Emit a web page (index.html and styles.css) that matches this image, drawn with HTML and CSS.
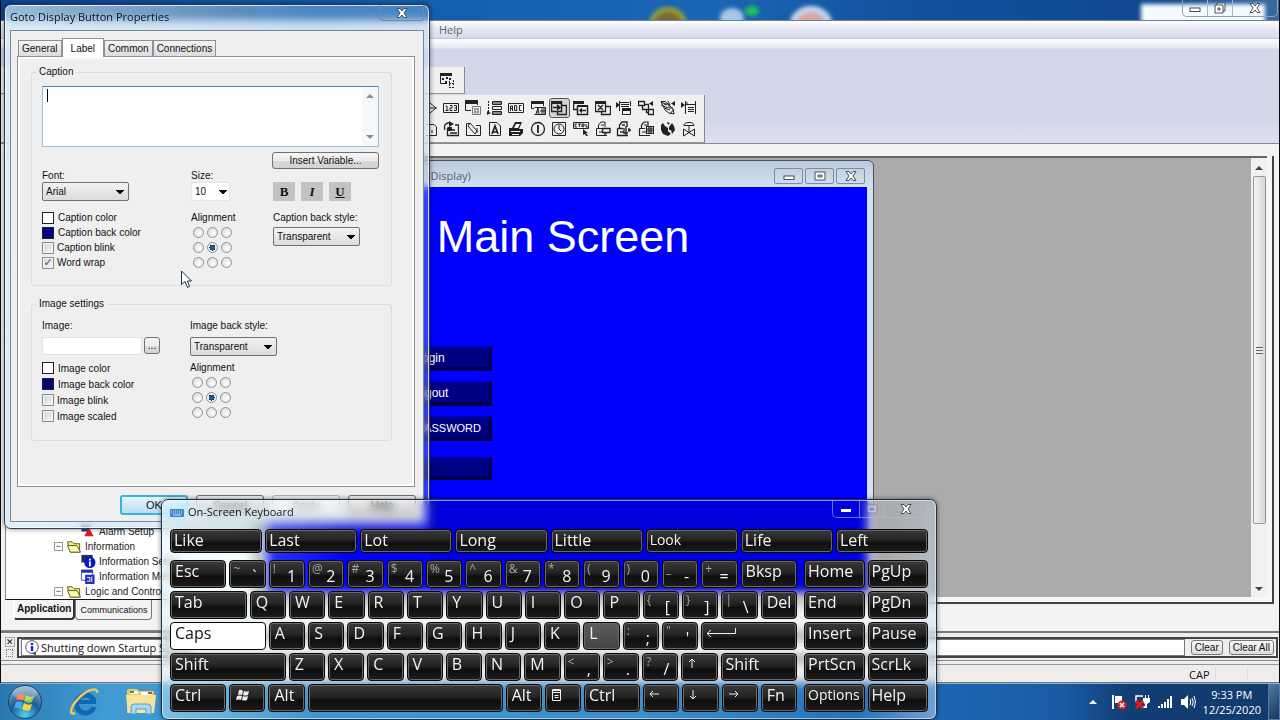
FILE: index.html
```html
<!DOCTYPE html>
<html lang="en">
<head>
<meta charset="utf-8">
<title>Goto Display Button Properties</title>
<link rel="stylesheet" href="styles.css">
</head>
<body>
<div class="desktop">
  <main class="app">
    <header class="app-title">
      <span class="app-name">FactoryTalk View Studio - Machine Edition</span>
      <span class="blob blob-a"></span><span class="blob blob-b"></span><span class="blob blob-c"></span><span class="blob blob-d"></span>
      <span class="glow"></span>
      <div class="win-controls">
        <button aria-label="Minimize"><svg width="12" height="12" viewBox="0 0 12 12"><rect class="glyph" x="1" y="6" width="10" height="3.500"/></svg></button>
        <button aria-label="Restore"><svg width="12" height="12" viewBox="0 0 12 12"><path class="glyph" d="M3 1H11V9H9V11H1V3H3Z M4 6H6V8H4Z M3 3H9V9"/></svg></button>
        <button class="wide" aria-label="Close"><svg width="12" height="12" viewBox="0 0 12 12"><path class="glyph" d="M1 1.500H4L6 4L8 1.500H11L8 6L11 10.500H8L6 8L4 10.500H1L4 6Z"/></svg></button>
      </div>
    </header>
    <nav class="menu"><button>Help</button></nav>
    <section class="rebar">
      <div class="toolbar short">
        <button aria-label="Objects"><svg class="ic" viewBox="0 0 16 16"><path d="M1.500 1.500H12.500V4M1.500 1.500V11.500H8"/><path class="f" d="M1 1H13V4H1ZM3 6h2v2H3ZM7 5h2v2H7ZM6 9h2v2H6ZM10 6h2v2h-2Z"/><path d="M10.500 9V15.500M10 11.500H15M10 15.500H15M14.500 8V14" stroke-dasharray="2 1"/></svg></button>
      </div>
      <div class="toolbar long">
        <button aria-label="Shape"><svg class="ic" viewBox="0 0 16 16"><path d="M8 3L14 8L8 13M6 8H15"/></svg></button>
        <button aria-label="Numeric display"><svg class="ic" viewBox="0 0 16 16"><path d="M.500 3.500H15.500V12.500H.500ZM2.500 6H4V10.500M2.500 10.500H5.500M7 5.500H9V8H7V10.500H9.500M11 5.500H13.500V10.500H11M11.500 8H13.500"/></svg></button>
        <button aria-label="Numeric input"><svg class="ic" viewBox="0 0 16 16"><path class="f" d="M0 0H13V4H0Z"/><path d="M.500 1V10.500H6M12.500 3V5" /><path stroke="#777" d="M7.500 6.500H15.500V14.500H7.500ZM9 9H14M9 12H14M10 8V14M13 8V14"/></svg></button>
        <button aria-label="List"><svg class="ic" viewBox="0 0 16 16"><path d="M1.500 1V12" stroke-dasharray="2 1"/><path class="f" d="M0 11L4 13L0 15Z"/><path d="M5.500 1.500H14.500V4.500H5.500ZM5.500 6.500H14.500V9.500H5.500ZM5.500 11.500H14.500V14.500H5.500ZM6 3H14M6 13H14"/></svg></button>
        <button aria-label="String display"><svg class="ic" viewBox="0 0 16 16"><path d="M.500 3.500H15.500V12.500H.500ZM2.500 11V6H4.500V11M2.500 8.500H4.500M6.500 5.500H8.500L9 7L8.500 8L9 10.500H6.500ZM13.500 5.500H11.500V10.500H13.500"/></svg></button>
        <button aria-label="String input"><svg class="ic" viewBox="0 0 16 16"><path class="f" d="M1 1H14V4H1Z"/><path d="M1.500 2V8.500H4M13.500 4V6M4.500 7.500H15.500V14.500H4.500M6 14L8 8L9 14M6 12H9M12 8V14M14 8V14M10 11H15"/></svg></button>
        <button class="on" aria-label="Goto display"><svg class="ic" viewBox="0 0 16 16"><path class="f" d="M0 1H11V4H0Z"/><path d="M.500 1.500V11.500H10.500V1.500M11 5.500H15.500V14.500H6.500V12M2 7.500H9" stroke-width="1.500"/><path class="f" d="M6 4L10 7.500L6 11Z"/></svg></button>
        <button aria-label="Return to display"><svg class="ic" viewBox="0 0 16 16"><path class="f" d="M0 1H11V4H0ZM4 5H15V7H4Z"/><path d="M.500 2V9.500H4M4.500 6V14.500H14.500V6M7 10.500H13" stroke-width="1.500"/><path class="f" d="M9 7.500V13.500L6 10.500Z"/></svg></button>
        <button aria-label="Close display"><svg class="ic" viewBox="0 0 16 16"><path class="f" d="M0 1H11V4H0Z"/><path d="M.500 1.500V11.500H10.500V1.500M11 6.500H15.500V14.500H6.500V12M3 5L8 10M8 5L3 10" stroke-width="1.300"/></svg></button>
        <button aria-label="Display list selector"><svg class="ic" viewBox="0 0 16 16"><path class="f" d="M0 2L4 5L0 8ZM6 8H15V11H6Z"/><path d="M3.500 1V11M3.500 2.500H13M5 4.500H13M5 6.500H13M6.500 9V14.500H14.500V9M14.500 1V6"/></svg></button>
        <button aria-label="Piloted list"><svg class="ic" viewBox="0 0 16 16"><path d="M.500 1.500H6.500V5.500H.500ZM4.500 6V9.500H10.500V4.500H7M8.500 10V12.500H10M10.500 9.500H15.500V14.500H10.500Z" stroke-width="1.300"/><path class="f" d="M15 1V6L11 3.500Z"/></svg></button>
        <button aria-label="Recipe selector"><svg class="ic" viewBox="0 0 16 16"><path d="M1 2L7 5M1 5L8 8M4 8L10 10M1 1.500L5 1.500L9 5L13 9L14 14L9 13L5 10Z M8 1L10 5M10 14L14 9M4 4H9V8H13"/><path class="f" d="M15 1V6L11 3.500Z"/></svg></button>
        <button aria-label="Recipe table"><svg class="ic" viewBox="0 0 16 16"><path class="f" d="M0 2L4 5L0 8Z"/><path d="M4.500 1V14M14.500 1V14M5 4.500H14M7 7.500H13M7 9.500H13M7 11.500H13M6 2V5"/></svg></button>

        <button aria-label="Page"><svg class="ic" viewBox="0 0 16 16"><path d="M4 3.500H12L14.500 6V14.500H4M10 9V12"/></svg></button>
        <button aria-label="Recipe restore"><svg class="ic" viewBox="0 0 16 16"><path d="M2 9C0 3 4 1 8 2.500M4.500 6.500V14.500H15.500V4H12M7 12H14M9 9H12" stroke-width="1.300"/><path class="f" d="M6 0L11 3L6 6ZM5 6H9V10H5Z"/></svg></button>
        <button aria-label="Edit"><svg class="ic" viewBox="0 0 16 16"><path d="M1.500 2.500H6M1.500 2.500V14.500H15.500V4.500H11M3 5L10 13L12 10L5 2ZM12 7V12"/></svg></button>
        <button aria-label="Text"><svg class="ic" viewBox="0 0 16 16"><path d="M2.500 1.500H10L13.500 5V14.500H2.500Z"/><path d="M5 13L8 5L11 13M5 11H10" stroke-width="1.700"/></svg></button>
        <button aria-label="Print"><svg class="ic" viewBox="0 0 16 16"><path class="f" d="M1 7H4L7 1H14L11 8H15V12L12 15H1Z"/><path class="w" d="M8 3H12L10 7H6ZM3 10H12V11H3ZM4 13H11V14H4Z"/></svg></button>
        <button aria-label="Information"><svg class="ic" viewBox="0 0 16 16"><circle cx="8" cy="8" r="6.500" stroke-width="1.300"/><path d="M8 4V12" stroke-width="1.800"/></svg></button>
        <button aria-label="Clock"><svg class="ic" viewBox="0 0 16 16"><path d="M1.500 1.500H14.500V14.500H1.500Z"/><circle cx="8" cy="8" r="5"/><path d="M8 4V8L10 10"/></svg></button>
        <button aria-label="Control"><svg class="ic" viewBox="0 0 16 16"><path d="M.500 1.500H15.500V7.500H.500ZM4 3H2V6H4M5 3H8M6.500 3V6M9 6V3H11V5H9L11 6M13 3V6H15"/><path class="f" d="M10 8L15 12L13 12L15 15L13 15L12 13L10 14Z"/></svg></button>
        <button aria-label="Print alarm"><svg class="ic" viewBox="0 0 16 16"><path d="M1.500 7.500H7M3.500 7V4L6 1H10V6M1.500 7.500V14.500H12M4 11H8M6 4H9"/><path d="M7.500 7.500H15V11.500H12L10 13V11.500H7.500Z" stroke-width="1.400"/></svg></button>
        <button aria-label="Clear alarm"><svg class="ic" viewBox="0 0 16 16"><path d="M1.500 7.500H7M3.500 7V4L6 1H11V6M1.500 7.500V14.500H12M4 11H8M6 4H9M8 7V12H12M10 5V14M12 9H15M13 7V11" stroke-width="1.300"/></svg></button>
        <button aria-label="Alarm list"><svg class="ic" viewBox="0 0 16 16"><path d="M1.500 7.500H7M3.500 7V4L6 1H10V6M1.500 7.500V14.500H12M4 11H8M6 4H9M8.500 5.500H15.500V12.500H8.500ZM9 8H15M9 10H15M11 6V12M13 6V12" stroke-width="1.200"/></svg></button>
        <button aria-label="Language"><svg class="ic" viewBox="0 0 16 16"><path class="f" d="M1 4L3 2L5 5L8 7L8 10L11 13L8 15L3 13L1 9ZM9 6L12 2L14 5L15 9L12 13L11 9L9 9ZM7 1L10 2L8 4Z"/></svg></button>
        <button aria-label="Symbol"><svg class="ic" viewBox="0 0 16 16"><path d="M3 4.500Q3 1.500 8 1.500T13 4.500ZM8 5V12M2.500 8V15L13.500 8V15L2.500 8"/></svg></button>
      </div>
    </section>
    <section class="work">
      <aside class="explorer">
        <ul class="tree">
          <li class="leaf"><svg class="tic" viewBox="0 0 16 16"><path fill="#283c9c" d="M1 1H10V8H1Z"/><path fill="#e81818" d="M9 4L14 13H4Z"/></svg>Alarm Setup</li>
          <li class="branch"><span class="minus">−</span><svg class="tic" viewBox="0 0 16 16"><path fill="#f4ee80" stroke="#555820" d="M1 3H6L8 5H14V14H4Z"/><path fill="#fffca8" stroke="#555820" d="M1 7H11L15 14H4Z"/></svg>Information</li>
          <li class="leaf"><svg class="tic" viewBox="0 0 16 16"><path fill="#222a60" d="M1 1H13V9H1Z"/><circle cx="10" cy="9" r="6" fill="#0718c8"/><path stroke="#fff" stroke-width="2" d="M10 5V7M10 8V13"/></svg>Information Setup</li>
          <li class="leaf"><svg class="tic" viewBox="0 0 16 16"><path fill="#fff" stroke="#4858b8" d="M1 1H13V12H1Z"/><path fill="#2030b8" d="M1 1H13V4H1ZM5 6H15V16H5Z"/><path stroke="#fff" d="M7 9H10V13H7M12 8V14"/></svg>Information Messages</li>
          <li class="branch"><span class="minus">−</span><svg class="tic" viewBox="0 0 16 16"><path fill="#f4ee80" stroke="#555820" d="M1 3H6L8 5H14V14H4Z"/><path fill="#fffca8" stroke="#555820" d="M1 7H11L15 14H4Z"/></svg>Logic and Control</li>
        </ul>
        <div class="sheet-tabs"><button class="cur">Application</button><button>Communications</button></div>
      </aside>
      <section class="mdi">
        <div class="canvas">
          <article class="display">
            <header class="display-title">
              <span>/Main Screen/ (Display)</span>
              <div class="mini-controls">
                <button aria-label="Minimize"><svg width="12" height="12" viewBox="0 0 12 12"><rect class="glyph" x="1" y="6" width="10" height="3.500"/></svg></button>
                <button aria-label="Maximize"><svg width="12" height="12" viewBox="0 0 12 12"><path class="glyph" fill-rule="evenodd" d="M1 2H11V10H1ZM4 5V7H8V5Z"/></svg></button>
                <button aria-label="Close"><svg width="12" height="12" viewBox="0 0 12 12"><path class="glyph" d="M1 1.500H4L6 4L8 1.500H11L8 6L11 10.500H8L6 8L4 10.500H1L4 6Z"/></svg></button>
              </div>
            </header>
            <div class="screen">
              <h1>Main Screen</h1>
              <div class="hmi">
                <button>Login</button>
                <button>Logout</button>
                <button class="end">PASSWORD</button>
                <button class="low" aria-label="Goto display"></button>
              </div>
            </div>
          </article>
        </div>
        <div class="vscroll"><i class="up"></i><div class="thumb"><i></i></div><i class="down"></i></div>
      </section>
    </section>
    <section class="log">
      <div class="grip"><button aria-label="Close log">✕</button><span></span></div>
      <div class="log-box">
        <output class="log-line"><svg width="16" height="16" viewBox="0 0 16 16"><circle cx="8" cy="7" r="6.300" fill="#fff" stroke="#555"/><path fill="#555" d="M8 13L12 16V12Z"/><path stroke="#1020e0" stroke-width="2.400" d="M8 3V5M8 6V11"/></svg>Shutting down Startup Server</output>
        <button>Clear</button><button>Clear All</button>
      </div>
    </section>
    <footer class="status"><span class="cap">CAP</span><span></span><span></span></footer>
  </main>

  <footer class="taskbar">
    <button class="orb" aria-label="Start"><svg width="36" height="36" viewBox="0 0 36 36">
      <defs><radialGradient id="orb" cx=".5" cy=".9" r=".9"><stop offset="0" stop-color="#4fd0f0"/><stop offset=".5" stop-color="#1c5c98"/><stop offset="1" stop-color="#8fb4cc"/></radialGradient></defs>
      <circle cx="18" cy="18" r="16.500" fill="url(#orb)" stroke="#16456f"/>
      <path fill="#f0692a" d="M11 10Q15 8 18 11L16 17Q13 15 9 16Z"/><path fill="#9ccf3c" d="M19 11Q23 14 27 12L25 18Q21 20 17 17Z"/>
      <path fill="#4aa8ea" d="M9 18Q13 16 16 19L14 25Q11 23 7 24Z"/><path fill="#fbd145" d="M17 19Q21 22 25 20L23 26Q19 28 15 25Z"/>
      <ellipse cx="18" cy="9" rx="12" ry="7" fill="#fff" opacity=".25"/></svg></button>
    <button aria-label="Internet Explorer"><svg width="32" height="32" viewBox="0 0 32 32"><path fill="none" stroke="#0f67b8" stroke-width="5" d="M26 21A9 9 0 1 1 26 15"/><path fill="#0f67b8" d="M9 14H28V18H9Z"/><path fill="none" stroke="#f4c64a" stroke-width="2.500" d="M7 27C-1 30 4 18 13 10C21 3 30 1 29 7"/></svg></button>
    <button aria-label="Explorer"><svg width="32" height="32" viewBox="0 0 32 32"><path fill="#e8c768" d="M2 5Q2 3 4 3H12L14 5H29V27H2Z"/><path fill="#fff" d="M5 5H13V8H5ZM16 6H27V9H16Z"/><path fill="#36a04c" d="M5 5H9V7H5Z"/><path fill="#d2402c" d="M23 6H27V8H23Z"/><path fill="#f8e39c" d="M1 9H31L29 27H3Z"/><path fill="#a8d8f2" stroke="#5b9cc8" d="M6 28V21Q6 18 9 18H23Q26 18 26 21V28H21V23H11V28Z"/></svg></button>
    <div class="tray">
      <i class="tri"></i>
      <svg width="16" height="16" viewBox="0 0 16 16"><path fill="#fff" d="M1 1H3V15H1ZM4 2H11V9H4Z"/><circle cx="11" cy="11" r="4.500" fill="#d9251c"/><path stroke="#fff" stroke-width="1.500" d="M9 9L13 13M13 9L9 13"/></svg>
      <svg width="16" height="16" viewBox="0 0 16 16"><path fill="none" stroke="#fff" stroke-width="1.500" d="M2 8V2H9"/><path fill="#fff" d="M11 1H12V4H14V1H15V4H16V8L13 10V14H9V12H11V10L9 8V4H11Z"/><path stroke="#e01818" stroke-width="3" d="M2 7L9 14M9 7L2 14"/></svg>
      <svg width="16" height="16" viewBox="0 0 16 16"><path fill="#fff" d="M1 12H3V14H1ZM4 10H6V14H4ZM7 8H9V14H7ZM10 5H12V14H10ZM13 2H15V14H13Z"/></svg>
      <svg width="16" height="16" viewBox="0 0 16 16"><path fill="#fff" d="M1 5H4L8 1V15L4 11H1Z"/><path fill="none" stroke="#fff" d="M10 5Q11.500 8 10 11M12 4Q14.500 8 12 12M14 2Q17 8 14 14"/></svg>
      <time>9:33 PM<br>12/25/2020</time>
      <button class="peek" aria-label="Show desktop"></button>
    </div>
  </footer>

  <form class="dialog">
    <header class="dialog-title"><span>Goto Display Button Properties</span>
      <button type="button" aria-label="Close"><svg width="12" height="12" viewBox="0 0 12 12"><path class="glyph" d="M1 1.500H4L6 4L8 1.500H11L8 6L11 10.500H8L6 8L4 10.500H1L4 6Z"/></svg></button></header>
    <div class="dialog-body">
      <div class="tabs"><button type="button">General</button><button type="button" class="cur">Label</button><button type="button">Common</button><button type="button">Connections</button></div>
      <div class="page">
        <fieldset class="caption">
          <legend>Caption</legend>
          <div class="memo"><textarea aria-label="Caption"></textarea><i class="caret"></i><span class="memo-bar"><i class="up"></i><i class="down"></i></span></div>
          <button type="button" class="btn insert">Insert Variable...</button>
          <div class="cols head">
            <div><label for="font">Font:</label><select id="font" class="drop"><option>Arial</option></select></div>
            <div><label for="size">Size:</label><select id="size" class="drop flat"><option>10</option></select></div>
            <div class="biu"><button type="button">B</button><button type="button"><em>I</em></button><button type="button"><u>U</u></button></div>
          </div>
          <div class="cols">
            <div class="opts">
              <label><button type="button" class="swatch"></button>Caption color</label>
              <label><button type="button" class="swatch navy"></button>Caption back color</label>
              <label><input type="checkbox">Caption blink</label>
              <label><input type="checkbox" checked>Word wrap</label>
            </div>
            <div class="opts"><span>Alignment</span>
              <div class="radios"><input type="radio" name="a" aria-label="Top left"><input type="radio" name="a" aria-label="Top"><input type="radio" name="a" aria-label="Top right"><input type="radio" name="a" aria-label="Left"><input type="radio" name="a" aria-label="Center" checked><input type="radio" name="a" aria-label="Right"><input type="radio" name="a" aria-label="Bottom left"><input type="radio" name="a" aria-label="Bottom"><input type="radio" name="a" aria-label="Bottom right"></div></div>
            <div class="opts"><label for="cbs">Caption back style:</label><select id="cbs" class="drop"><option>Transparent</option></select></div>
          </div>
        </fieldset>
        <fieldset class="image">
          <legend>Image settings</legend>
          <div class="cols head">
            <div><label for="img">Image:</label><div class="browse"><input id="img" type="text"><button type="button" class="btn">...</button></div></div>
            <div><label for="ibs">Image back style:</label><select id="ibs" class="drop"><option>Transparent</option></select></div>
          </div>
          <div class="cols">
            <div class="opts">
              <label><button type="button" class="swatch"></button>Image color</label>
              <label><button type="button" class="swatch navy"></button>Image back color</label>
              <label><input type="checkbox">Image blink</label>
              <label><input type="checkbox">Image scaled</label>
            </div>
            <div class="opts"><span>Alignment</span>
              <div class="radios"><input type="radio" name="b" aria-label="Top left"><input type="radio" name="b" aria-label="Top"><input type="radio" name="b" aria-label="Top right"><input type="radio" name="b" aria-label="Left"><input type="radio" name="b" aria-label="Center" checked><input type="radio" name="b" aria-label="Right"><input type="radio" name="b" aria-label="Bottom left"><input type="radio" name="b" aria-label="Bottom"><input type="radio" name="b" aria-label="Bottom right"></div></div>
          </div>
        </fieldset>
      </div>
      <div class="actions"><button type="button" class="btn ok">OK</button><button type="button" class="btn">Cancel</button><button type="button" class="btn" disabled>Apply</button><button type="button" class="btn">Help</button></div>
    </div>
  </form>

  <section class="osk" aria-label="On-Screen Keyboard">
    <header class="osk-title">
      <svg width="14" height="8" viewBox="0 0 14 8"><rect width="14" height="8" rx="1" fill="#3f83cc"/><path stroke="#cfe6fa" stroke-dasharray="1 1" d="M1 2H13M1 4H13"/><path stroke="#cfe6fa" d="M3 6H11"/></svg>
      <span>On-Screen Keyboard</span>
      <div class="osk-controls">
        <button class="first" aria-label="Minimize"><svg width="12" height="12" viewBox="0 0 12 12"><rect x="1" y="6" width="10" height="3" fill="#fff"/></svg></button>
        <button aria-label="Maximize"><svg width="12" height="12" viewBox="0 0 12 12" opacity=".35"><path class="glyph" fill-rule="evenodd" d="M1 2H11V10H1ZM4 5V7H8V5Z"/></svg></button>
        <button class="wide" aria-label="Close"><svg width="12" height="12" viewBox="0 0 12 12"><path class="glyph" d="M1 1.500H4L6 4L8 1.500H11L8 6L11 10.500H8L6 8L4 10.500H1L4 6Z"/></svg></button>
      </div>
    </header>
    <div class="suggest"><button>Like</button><button>Last</button><button>Lot</button><button>Long</button><button>Little</button><button class="sm">Look</button><button>Life</button><button>Left</button></div>
    <div class="board">
      <div class="keys">
        <div class="row"><button class="w56">Esc</button><button class="two"><sup>~</sup><b>`</b></button><button class="two"><sup>!</sup><b>1</b></button><button class="two"><sup>@</sup><b>2</b></button><button class="two"><sup>#</sup><b>3</b></button><button class="two"><sup>$</sup><b>4</b></button><button class="two"><sup>%</sup><b>5</b></button><button class="two"><sup>^</sup><b>6</b></button><button class="two"><sup>&amp;</sup><b>7</b></button><button class="two"><sup>*</sup><b>8</b></button><button class="two"><sup>(</sup><b>9</b></button><button class="two"><sup>)</sup><b>0</b></button><button class="two"><sup>_</sup><b>-</b></button><button class="two"><sup>+</sup><b>=</b></button><button class="w56">Bksp</button></div>
        <div class="row"><button class="w76">Tab</button><button>Q</button><button>W</button><button>E</button><button>R</button><button>T</button><button>Y</button><button>U</button><button>I</button><button>O</button><button>P</button><button class="two"><sup>{</sup><b>[</b></button><button class="two"><sup>}</sup><b>]</b></button><button class="two"><sup>|</sup><b>\</b></button><button>Del</button></div>
        <div class="row"><button class="w95 lit">Caps</button><button>A</button><button>S</button><button>D</button><button>F</button><button>G</button><button>H</button><button>J</button><button>K</button><button class="hover">L</button><button class="two"><sup>:</sup><b>;</b></button><button class="two"><sup>"</sup><b>'</b></button><button class="w95" aria-label="Enter"><svg width="32" height="14" viewBox="0 0 32 14"><path d="M1 8.500H29.500V3M5 5L1 8.500L5 12"/></svg></button></div>
        <div class="row"><button class="w115">Shift</button><button>Z</button><button>X</button><button>C</button><button>V</button><button>B</button><button>N</button><button>M</button><button class="two"><sup>&lt;</sup><b>,</b></button><button class="two"><sup>&gt;</sup><b>.</b></button><button class="two"><sup>?</sup><b>/</b></button><button aria-label="Up"><svg width="12" height="14" viewBox="0 0 12 14"><path d="M5 12V3M2 6L5 3L8 6"/></svg></button><button class="w76">Shift</button></div>
        <div class="row"><button class="w56">Ctrl</button><button aria-label="Windows"><svg class="flag" width="16" height="16" viewBox="0 0 16 16"><path d="M4 3Q6 2 8 4L7 8Q5 7 3 8ZM9 4Q12 5 14 4L13 8Q10 9 8 8ZM2 9Q5 8 7 9L6 13Q4 12 1 13ZM8 9Q10 10 13 9L12 13Q9 14 7 13Z"/></svg></button><button>Alt</button><button class="w194" aria-label="Space"></button><button>Alt</button><button aria-label="Menu"><svg width="12" height="15" viewBox="0 0 12 15"><path d="M1.500 2.500H9.500V13.500H1.500ZM1.500 5.500H9.500M3.500 8.500H7.500M3.500 10.500H7.500M1.500 3.500H9.500"/></svg></button><button class="w56">Ctrl</button><button aria-label="Left"><svg width="12" height="14" viewBox="0 0 12 14"><path d="M1 7H10M4 4L1 7L4 10"/></svg></button><button aria-label="Down"><svg width="12" height="14" viewBox="0 0 12 14"><path d="M5 3V12M2 9L5 12L8 9"/></svg></button><button aria-label="Right"><svg width="12" height="14" viewBox="0 0 12 14"><path d="M1 7H10M7 4L10 7L7 10"/></svg></button><button>Fn</button></div>
      </div>
      <div class="pad"><button>Home</button><button>PgUp</button><button>End</button><button>PgDn</button><button>Insert</button><button>Pause</button><button>PrtScn</button><button>ScrLk</button><button class="sm">Options</button><button>Help</button></div>
    </div>
  </section>

  <svg class="cursor" width="12" height="20" viewBox="0 0 12 20"><path fill="#fff" stroke="#222c40" d="M.500 1V14.500L4 11.500L6.500 17.500L8.500 16.500L6.500 11H10.500Z"/></svg>
</div>
</body>
</html>
```
FILE: styles.css
```css
* { box-sizing: border-box; }
body { margin: 0; font: 10px/14px "Liberation Sans", Arial, sans-serif; color: #111; }
button, input, select, textarea { font: inherit; color: inherit; margin: 0; padding: 0; border: 0; background: none; border-radius: 0; }
.desktop { position: relative; height: 100vh; min-height: 720px; overflow: hidden; display: flex; flex-direction: column; background: #0b0b0b; }
.glyph { fill: #fff; stroke: #4a4f5c; stroke-width: 1; }
.up, .down { width: 0; height: 0; border: 4px solid transparent; }
.up { border-top: 0; border-bottom-color: #444; }
.down { border-bottom: 0; border-top-color: #444; }

/* application window */
.app { flex: 1; display: flex; flex-direction: column; min-height: 0; background: #f0eff0; margin: 0 1px; }
.app-title { position: relative; overflow: hidden; height: 21px; display: flex; justify-content: flex-end; background: linear-gradient(90deg, #0d4591, #1460b0 35%, #1b66b6 55%, #12509c 72%, #0f478f 92%, #3a6ba2); border-bottom: 1px solid #6d7f98; }
.app-name { position: absolute; left: 44px; top: 3px; font: 11px/16px "Open Sans", sans-serif; }
.blob { position: absolute; border-radius: 50%; filter: blur(2px); }
.blob-a { left: 648px; top: 7px; width: 38px; height: 36px; background: #7a6838; border: 5px solid #97a32e; }
.blob-b { left: 719px; top: 8px; width: 24px; height: 20px; background: #a9c8e8; }
.blob-c { left: 744px; top: 6px; width: 14px; height: 10px; background: #22c35c; }
.blob-d { left: 789px; top: 6px; width: 42px; height: 36px; background: #d8a4a8; border: 6px solid #c4dcee; }
.glow { position: absolute; right: 14px; top: 4px; width: 124px; height: 20px; background: #f4fbff; filter: blur(2px); }
.win-controls { position: relative; display: flex; height: 17px; margin-right: 1px; border: 1px solid #8ba2b8; border-top: 0; border-radius: 0 0 5px 5px; }
.win-controls button { width: 25px; display: grid; place-items: center; border-right: 1px solid #a5b8c8; }
.win-controls .wide { width: 44px; border: 0; }
.menu { height: 18px; padding-left: 438px; background: linear-gradient(#fff, #e9ebf6 40%, #d7daec); border-bottom: 1px solid #c0c2d6; }
.menu button { font: 11px/17px "Open Sans", sans-serif; color: #666; }
.rebar { height: 105px; padding-top: 28px; background: linear-gradient(#fff, #e3e7f4 9px, #d2d8ea 10px, #d2d8ea 80%, #dde0f2); display: flex; flex-direction: column; gap: 1px; border-bottom: 1px solid #888; }
.toolbar { background: #f0f0f0; border-right: 1px solid #888; border-bottom: 1px solid #999; display: grid; }
.toolbar button { display: grid; place-items: center; height: 20px; border-radius: 3px; }
.toolbar .on { border: 1px solid #555; background: #d4d4d4; }
.short { width: 464px; height: 27px; padding: 3px 9px; justify-content: end; }
.long { width: 704px; height: 48px; padding: 3px 4px 3px 418px; grid-template-columns: repeat(13, 1fr); grid-auto-rows: 20px; row-gap: 1px; }
.ic { width: 16px; height: 16px; fill: none; stroke: #222; stroke-width: 1; }
.ic .f { fill: #222; stroke: none; }
.ic .w { fill: #fff; stroke: none; }
.work { flex: 1; display: flex; min-height: 0; padding-top: 12px; background: #f3f3f3; }
.explorer { width: 250px; display: flex; flex-direction: column; padding: 0 0 6px 4px; border-bottom: 1px solid #888; }
.tree { flex: 1; margin: 0; padding: 0; background: #fff; list-style: none; display: flex; flex-direction: column; justify-content: flex-end; border: 1px solid #888; border-bottom: 1px solid #111; overflow: hidden; }
.tree li { display: flex; align-items: center; height: 15px; gap: 3px; color: #222; }
.leaf { padding-left: 74px; }
.branch { padding-left: 48px; }
.tic { width: 16px; height: 15px; fill: none; }
.minus { width: 9px; height: 9px; border: 1px solid #999; color: #333; font-size: 9px; line-height: 7px; text-align: center; }
.sheet-tabs { display: flex; height: 24px; padding: 0 0 4px 8px; }
.sheet-tabs button { padding: 0 4px; border: 1px solid #777; border-top: 0; border-radius: 0 0 4px 4px; font-size: 9px; }
.sheet-tabs .cur { padding: 0 2px; font-weight: bold; font-size: 10px; border: 2px solid #333; border-top: 0; border-left-color: #fff; }
.mdi { flex: 1; display: flex; margin: 0 5px 27px 4px; border-right: 2px solid #444; border-bottom: 2px solid #444; padding: 0 5px 5px 0; background: #f7f7f7; min-width: 0; }
.canvas { flex: 1; position: relative; overflow: hidden; background: #ababab; border-top: 2px solid #666; }
.vscroll { width: 16px; display: flex; flex-direction: column; align-items: center; gap: 6px; padding: 8px 1px 6px; background: #f1f1f1; border-top: 2px solid #666; }
.thumb { width: 13px; height: 348px; margin-bottom: auto; border: 1px solid #999; border-radius: 2px; background: linear-gradient(90deg, #f6f6f6, #d3d5d8); display: grid; place-items: center; }
.thumb i { width: 7px; height: 7px; background: repeating-linear-gradient(#666 0 1px, #eee 1px 3px); }
.display { position: absolute; left: 5px; top: 2px; width: 614px; height: 432px; padding: 0 6px; border: 1px solid #4b5561; border-radius: 6px 6px 0 0; background: linear-gradient(#bccbdc, #d3e0ee 26px, #d6e2f0); display: flex; flex-direction: column; }
.display-title { height: 26px; padding: 3px 2px 0 86px; display: flex; justify-content: space-between; align-items: center; font: 11px/16px "Open Sans", sans-serif; color: #5b6068; }
.mini-controls { display: flex; gap: 2px; }
.mini-controls button { width: 29px; height: 16px; border: 1px solid #7e8c9f; border-radius: 2px; display: grid; place-items: center; }
.screen { flex: 1; background: #0000ff; color: #fff; }
.screen h1 { margin: 0; padding: 25px 8px 0 0; font-size: 45px; line-height: 50px; font-weight: normal; text-align: center; white-space: nowrap; }
.hmi { display: flex; flex-direction: column; gap: 10px; width: 124px; margin: 84px 0 0 101px; }
.hmi button { height: 25px; font-size: 12px; background: #000084; border: solid #00004a; border-width: 2px 3px 4px; border-top-color: #0000a8; white-space: nowrap; }
.hmi .end { font-size: 11px; text-align: right; padding-right: 8px; }
.hmi .low { height: 23px; margin-top: 6px; }
.log { height: 30px; display: flex; padding: 4px 1px 0 3px; gap: 2px; border-top: 2px solid #777; border-bottom: 1px solid #888; background: #eee; }
.grip { width: 11px; display: flex; flex-direction: column; align-items: center; gap: 2px; }
.grip button { width: 10px; height: 10px; font-size: 9px; line-height: 9px; border: 1px solid #aaa; }
.grip span { width: 7px; height: 8px; border: 1px dotted #777; }
.log-box { flex: 1; height: 21px; display: flex; align-items: center; gap: 6px; padding: 1px 2px; border: 2px solid #444; min-width: 0; }
.log-line { flex: 1; height: 17px; display: flex; align-items: center; gap: 1px; padding-left: 2px; background: #fff; border: 1px solid #777; font: 11px/15px "Open Sans", sans-serif; overflow: hidden; white-space: nowrap; }
.log-box button { height: 15px; padding: 0 3px; border: 1px solid #777; border-radius: 3px; background: linear-gradient(#f8f8f8, #ddd); line-height: 13px; }
.status { height: 19px; margin-top: 3px; display: flex; justify-content: flex-end; align-items: center; background: #f1ecec; border-top: 1px solid #999; border-bottom: 1px solid #777; font: 11px/16px "Open Sans", sans-serif; }
.status span { width: 32px; height: 14px; line-height: 15px; border-left: 1px solid #ddd; }
.status .cap { border: 0; width: 26px; }

/* taskbar */
.taskbar { height: 37px; display: flex; align-items: center; padding-left: 7px; gap: 25px; background: linear-gradient(90deg, #2b78b0, #3f9bd2 8%, #3a90cc 50%, #1c66b2 74%, #1a5ba4 83%, #123e74 88%, #123a6c); border-top: 1px solid #7fb2d8; }
.taskbar button { display: grid; place-items: center; }
.tray { margin-left: auto; height: 100%; display: flex; align-items: center; gap: 7px; color: #fff; }
.tri { border: 4px solid transparent; border-top: 0; border-bottom: 4px solid #fff; margin-right: 7px; }
.tray time { font: 11px/15px "Open Sans", sans-serif; text-align: center; }
.tray .peek { width: 12px; height: 100%; border: 1px solid #547ba4; background: linear-gradient(135deg, #52799f, #17365e); }

/* properties dialog */
.dialog { position: absolute; left: 4px; top: 4px; width: 426px; height: 525px; padding: 0 5px 6px; display: flex; flex-direction: column; border: 1px solid #2c3c50; border-radius: 7px; box-shadow: inset 0 0 0 1px rgba(255, 255, 255, .7), 0 0 5px rgba(0, 0, 0, .5); background: linear-gradient(100deg, rgba(215, 238, 252, .7), rgba(160, 205, 240, .4) 60%, rgba(200, 230, 250, .25)); backdrop-filter: blur(4px); }
.dialog-title { height: 25px; display: flex; justify-content: space-between; align-items: flex-start; font: 11px/23px "Open Sans", sans-serif; color: #0c1520; }
.dialog-title button { width: 44px; height: 16px; border: 1px solid #6d8aa8; border-top: 0; border-radius: 0 0 4px 4px; display: grid; place-items: center; }
.dialog-body { flex: 1; background: #efefef; border: 1px solid #7c8894; padding: 7px 8px 6px 6px; display: flex; flex-direction: column; }
.tabs { display: flex; align-items: flex-end; height: 18px; padding-left: 1px; }
.tabs button { height: 16px; padding: 0 3px; border: 1px solid #8c9098; border-bottom: 0; background: linear-gradient(#f4f4f4, #dcdcdc); line-height: 15px; }
.tabs .cur { height: 19px; margin-bottom: -1px; padding: 0 8px; background: #fff; position: relative; }
.page { flex: 1; border: 1px solid #8c9098; box-shadow: inset 0 0 0 2px #fafafa; padding: 8px 22px 0 13px; display: flex; flex-direction: column; gap: 11px; }
.page fieldset { margin: 0; border: 1px solid #dcdcdc; border-radius: 3px; padding: 7px 12px 15px 10px; min-width: 0; }
.page legend { padding: 0 3px; margin-left: -6px; height: 14px; }
.page .image { padding: 8px 12px 16px 10px; }
.memo { position: relative; display: flex; height: 61px; border: 1px solid #9cc0da; border-top-color: #4a88b4; background: #fff; }
.memo textarea { flex: 1; resize: none; outline: 0; padding: 3px 5px; }
.caret { position: absolute; left: 4px; top: 2px; width: 1px; height: 13px; background: #000; }
.memo-bar { width: 16px; background: #f2f2f2; display: flex; flex-direction: column; justify-content: space-between; align-items: center; padding: 7px 0; opacity: .6; }
.btn { border: 1px solid #707070; border-radius: 3px; background: linear-gradient(#f5f5f5, #ebebeb 50%, #dadada 51%, #d2d2d2); }
.insert { display: block; width: 107px; height: 17px; margin: 5px 0 0 auto; line-height: 14px; }
.cols { display: grid; grid-template-columns: 149px 82px 1fr; }
.head { margin-bottom: 9px; }
.head label { display: block; line-height: 13px; }
.drop { display: block; appearance: none; width: 87px; height: 19px; padding: 0 18px 0 3px; border: 1px solid #707070; border-radius: 2px; background: linear-gradient(to bottom right, #000 50%, transparent 51%) right 4px center / 4px 4px no-repeat, linear-gradient(to bottom left, #000 50%, transparent 51%) right 8px center / 4px 4px no-repeat, linear-gradient(#f2f2f2, #dcdcdc); }
.flat { width: 39px; border-color: #e4e4e4; padding-right: 12px; background: linear-gradient(to bottom right, #000 50%, transparent 51%) right 2px center / 4px 4px no-repeat, linear-gradient(to bottom left, #000 50%, transparent 51%) right 6px center / 4px 4px no-repeat, #fff; }
.biu { display: flex; gap: 6px; align-items: flex-end; }
.biu button { width: 22px; height: 19px; background: #c3c3c3; font: bold 13px/18px "Liberation Serif", serif; }
.opts { display: flex; flex-direction: column; align-items: flex-start; line-height: 15px; }
.opts label { display: flex; align-items: center; height: 15px; white-space: nowrap; }
.opts .drop { margin-top: 2px; }
.swatch { width: 12px; height: 12px; border: 1px solid #222; background: #fff; margin-right: 4px; }
.navy { background: #000080; }
.opts input[type="checkbox"] { appearance: none; width: 12px; height: 12px; margin-right: 3px; border: 1px solid #8e8f8f; background: linear-gradient(135deg, #d0d2d6, #fafafa); box-shadow: inset 0 0 0 1px #f4f4f4; display: grid; place-items: center; }
.opts input[type="checkbox"]:checked::after { content: "✓"; font: bold 11px/10px "DejaVu Sans", sans-serif; color: #3e509c; }
.radios { display: grid; grid-template-columns: repeat(3, 14px); grid-auto-rows: 15px; align-items: center; justify-items: center; }
.radios input { appearance: none; width: 11px; height: 11px; border: 1px solid #909296; border-radius: 50%; background: radial-gradient(circle at 60% 60%, #fff, #cfd2d6); }
.radios input:checked { background: radial-gradient(circle, #1c5a90 0 2px, #123 3px, #eef2f6 3px); }
.image .cols { grid-template-columns: 148px 82px 1fr; }
.image .head { margin-bottom: 4px; }
.image .head label { line-height: 14px; margin-bottom: 4px; }
.image .opts label { height: 16px; }
.image .radios { grid-template-columns: repeat(3, 14px); }
.browse { display: flex; gap: 2px; }
.browse input { width: 100px; height: 18px; border: 1px solid #e2e2e2; background: #fff; }
.browse .btn { width: 16px; height: 17px; line-height: 12px; }
.actions { display: flex; justify-content: flex-end; gap: 8px; margin: 8px -1px 0 0; }
.actions .btn { width: 68px; height: 20px; font-size: 11px; }
.actions .ok { border: 2px solid #38b4dc; background: linear-gradient(#e6f6fd, #b8def0); }
.actions .btn:disabled { color: #888; border-color: #adb2b5; background: #f4f4f4; }

/* on-screen keyboard */
.osk { position: absolute; left: 161px; top: 499px; width: 776px; padding: 0 8px 7px; font-family: "Open Sans", sans-serif; border: 1px solid #203040; border-radius: 7px; box-shadow: inset 0 0 0 1px rgba(235, 248, 255, .6), 0 0 5px rgba(0, 0, 0, .5); background: linear-gradient(rgba(0, 0, 20, .14), rgba(0, 0, 20, .14)) 268px 0 / 438px 90px no-repeat, linear-gradient(100deg, rgba(222, 248, 255, .5), rgba(210, 240, 255, 0) 24%, rgba(210, 240, 255, 0) 90%, rgba(200, 225, 250, .5)); backdrop-filter: blur(5px); }
.osk-title { height: 29px; display: flex; align-items: flex-start; }
.osk-title > svg { margin-top: 9px; }
.osk-title span { margin-left: 4px; font-size: 11px; line-height: 24px; color: #0c1520; }
.osk-controls { display: flex; height: 18px; margin-left: auto; border: 1px solid rgba(170, 190, 225, .6); border-top: 0; border-radius: 0 0 5px 5px; }
.osk-controls button { width: 24px; display: grid; place-items: center; border-right: 1px solid rgba(170, 190, 225, .6); }
.osk-controls .first { width: 27px; }
.osk-controls .wide { width: 43px; border: 0; }
.suggest { display: flex; gap: 3px; margin-bottom: 7px; }
.suggest button, .row button, .pad button { flex: 36 1 36px; min-width: 0; height: 28px; padding: 0 0 0 5px; display: flex; align-items: flex-start; overflow: hidden; text-align: left; font-size: 16px; line-height: 21px; color: #f2f2f2; border: 1px solid #080808; border-radius: 4px; background: linear-gradient(#393939, #242424 45%, #0e0e0e 60%, #1c1c1c); box-shadow: inset 0 0 0 1px #686868; white-space: nowrap; }
.suggest button { height: 24px; padding-left: 3px; line-height: 20px; }
.suggest .sm, .pad .sm { font-size: 14px; line-height: 20px; }
.board { display: flex; gap: 7px; }
.keys { flex: 1; min-width: 0; display: flex; flex-direction: column; gap: 3px; }
.row { display: flex; gap: 3px; }
.pad { width: 124px; display: grid; grid-template-columns: 1fr 1fr; gap: 3px; }
.pad button { padding-left: 3px; }
.row .w56 { flex: 56 1 56px; padding-left: 4px; }
.row .w76 { flex: 76 1 76px; padding-left: 4px; }
.row .w95 { flex: 95 1 95px; padding-left: 4px; }
.row .w115 { flex: 115 1 115px; padding-left: 4px; }
.row .w194 { flex: 194 1 194px; }
.row .two { justify-content: space-between; padding: 0 8px 0 3px; }
.two sup { font-size: 12px; line-height: 16px; color: #a5a5a5; vertical-align: top; }
.two b { font-weight: normal; line-height: 31px; }
.row .lit { background: #fff; color: #111; box-shadow: none; }
.row .hover { background: linear-gradient(#5e5e5e, #444); }
.row svg { fill: none; stroke: #eee; margin-top: 2px; }
.row .flag { fill: #eee; stroke: none; }

.cursor { position: absolute; left: 181px; top: 270px; }
```
